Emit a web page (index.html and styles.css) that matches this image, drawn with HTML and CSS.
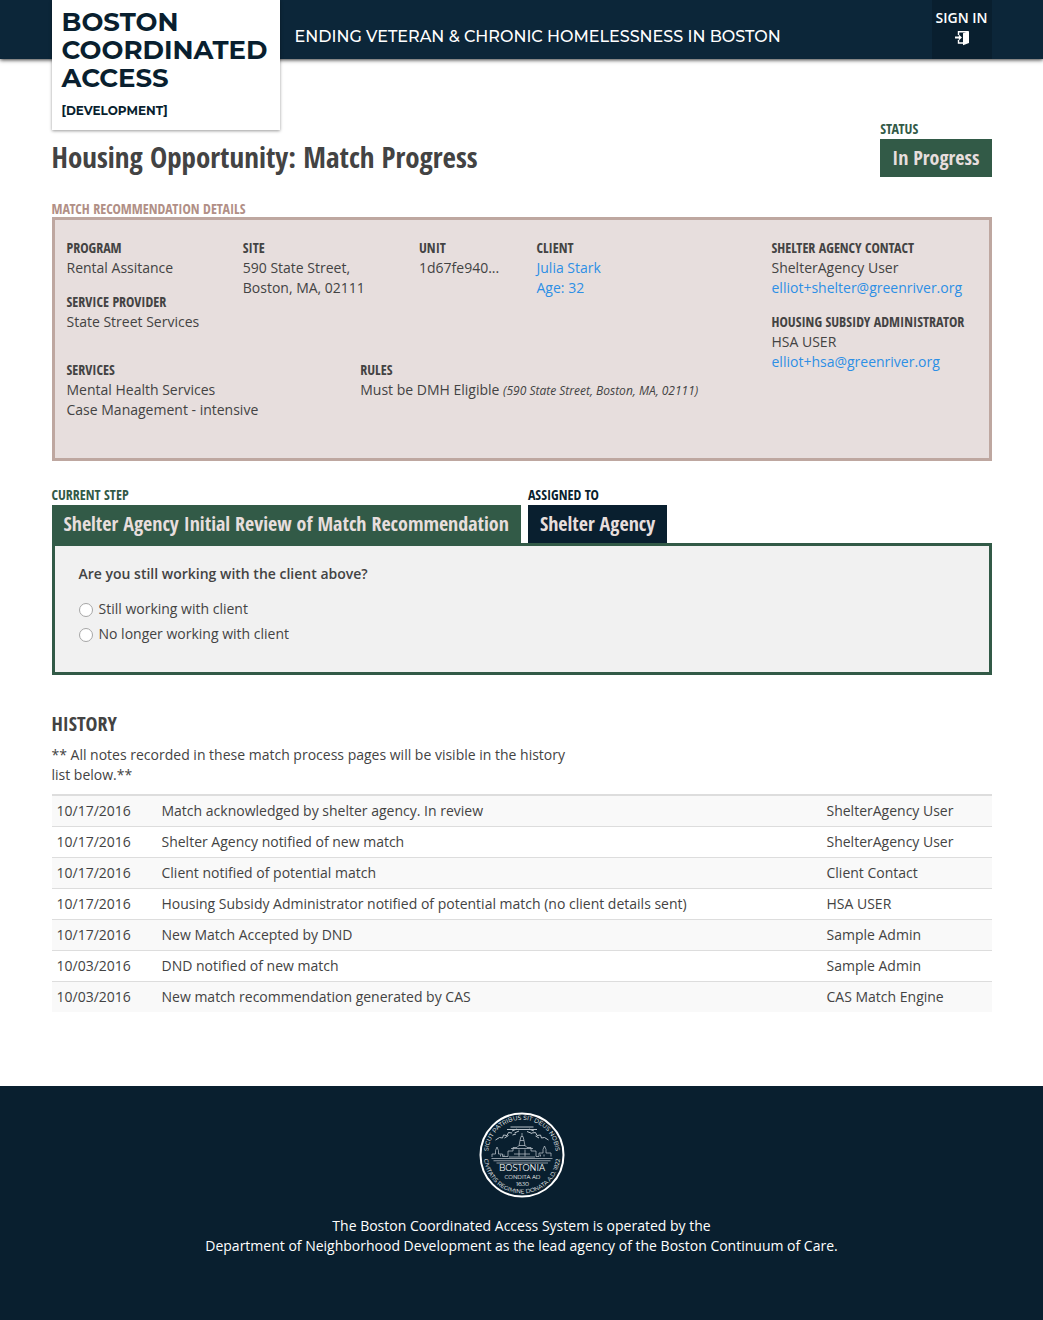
FILE: index.html
```html
<!DOCTYPE html>
<html lang="en">
<head>
<meta charset="utf-8">
<meta name="viewport" content="width=device-width, initial-scale=1">
<title>Boston Coordinated Access</title>
<link rel="stylesheet" href="styles.css">
</head>
<body>
<header class="site-header">
  <div class="container site-header-inner">
    <a class="logo" href="#"><span class="logo-name">Boston Coordinated Access</span><span class="logo-env">[Development]</span></a>
    <p class="tagline">Ending Veteran &amp; Chronic Homelessness in Boston</p>
    <a class="sign-in" href="#">Sign In
      <svg class="sign-in-icon" viewBox="0 0 14 14" aria-hidden="true"><path d="M3.500 4V.700H13M3.500 9v3H8" fill="none" stroke="#fff" stroke-width="1.400"/><path d="M8 2.300L14 0v12L8 14.300z" fill="#fff"/><path d="M0 5.600h3.800V3.600L7 6.500 3.800 9.400V7.400H0z" fill="#fff"/></svg>
    </a>
  </div>
</header>

<main class="container">
  <div class="title-row">
    <h1 class="page-title">Housing Opportunity: Match Progress</h1>
    <div class="flag flag-green">
      <span class="label">Status</span>
      <strong class="flag-value">In Progress</strong>
    </div>
  </div>

  <section class="details">
    <h2 class="label details-heading">Match Recommendation Details</h2>
    <div class="details-panel">
      <div class="details-main">
        <div class="details-top">
          <div class="facts">
            <div><h3 class="label">Program</h3>Rental Assitance</div>
            <div><h3 class="label">Service Provider</h3>State Street Services</div>
          </div>
          <div><h3 class="label">Site</h3>590 State Street,<br>Boston, MA, 02111</div>
          <div><h3 class="label">Unit</h3>1d67fe940...</div>
          <div><h3 class="label">Client</h3><a href="#">Julia Stark<br>Age: 32</a></div>
        </div>
        <div class="details-bottom">
          <div><h3 class="label">Services</h3>Mental Health Services<br>Case Management - intensive</div>
          <div><h3 class="label">Rules</h3>Must be DMH Eligible <em class="rule-note">(590 State Street, Boston, MA, 02111)</em></div>
        </div>
      </div>
      <div class="facts details-contacts">
        <div><h3 class="label">Shelter Agency Contact</h3>ShelterAgency User<br><a href="#">elliot+shelter@greenriver.org</a></div>
        <div><h3 class="label">Housing Subsidy Administrator</h3>HSA USER<br><a href="#">elliot+hsa@greenriver.org</a></div>
      </div>
    </div>
  </section>

  <section class="step">
    <div class="step-flags">
      <div class="flag flag-green">
        <span class="label">Current Step</span>
        <strong class="flag-value">Shelter Agency Initial Review of Match Recommendation</strong>
      </div>
      <div class="flag flag-navy">
        <span class="label">Assigned To</span>
        <strong class="flag-value">Shelter Agency</strong>
      </div>
    </div>
    <fieldset class="step-panel">
      <legend class="question">Are you still working with the client above?</legend>
      <label class="choice"><input class="radio" type="radio" name="working">Still working with client</label>
      <label class="choice"><input class="radio" type="radio" name="working">No longer working with client</label>
    </fieldset>
  </section>

  <section class="history">
    <h2 class="history-heading">History</h2>
    <p class="history-note">** All notes recorded in these match process pages will be visible in the history list below.**</p>
    <table class="history-table">
      <tbody>
        <tr><td class="col-date">10/17/2016</td><td>Match acknowledged by shelter agency. In review</td><td class="col-user">ShelterAgency User</td></tr>
        <tr><td>10/17/2016</td><td>Shelter Agency notified of new match</td><td>ShelterAgency User</td></tr>
        <tr><td>10/17/2016</td><td>Client notified of potential match</td><td>Client Contact</td></tr>
        <tr><td>10/17/2016</td><td>Housing Subsidy Administrator notified of potential match (no client details sent)</td><td>HSA USER</td></tr>
        <tr><td>10/17/2016</td><td>New Match Accepted by DND</td><td>Sample Admin</td></tr>
        <tr><td>10/03/2016</td><td>DND notified of new match</td><td>Sample Admin</td></tr>
        <tr><td>10/03/2016</td><td>New match recommendation generated by CAS</td><td>CAS Match Engine</td></tr>
      </tbody>
    </table>
  </section>
</main>

<footer class="site-footer">
  <svg class="seal" viewBox="0 0 344 344" role="img" aria-label="Seal of the City of Boston">
    <defs>
      <path id="arc-top" d="M37 166A135 135 0 0 1 307 166"/>
      <path id="arc-bottom" d="M20 174A152 152 0 0 0 324 174"/>
    </defs>
    <circle cx="172" cy="172" r="166" fill="none" stroke="#fff" stroke-width="8"/>
    <g class="seal-text">
      <text font-size="24"><textPath href="#arc-top" startOffset="50%">SICUT PATRIBUS SIT DEUS NOBIS</textPath></text>
      <text font-size="23"><textPath href="#arc-bottom" startOffset="50%">CIVITATIS REGIMINE DONATA A.D. 1822</textPath></text>
      <text x="172" y="236" font-size="34">BOSTONIA</text>
      <text x="174" y="267" font-size="22">CONDITA AD</text>
      <text x="174" y="297" font-size="24">1630</text>
    </g>
    <g fill="none" stroke="#b9c2c9" stroke-width="3">
      <path d="M50 186H294M58 195H286M70 204H276"/>
      <path d="M52 180v-12h14v-14l6-14 6 14v14h16v10h22v-22h20v-14h16l8-8h24l8 8h16v14h20v22h12v-14h16v-14l6-14 6 14v14h20v14"/>
      <path d="M160 136l4-22h16l4 22M164 114l4-16h8l4 16M172 98V84M128 146h88M140 168h64M120 180h104M160 150v28M184 150v28"/>
      <path d="M132 76l20-8M142 84l18-8M134 92l14-4M200 68l20 8M192 78l20 8M66 112l16-10 12 2 4-12 14 2 6-12 14 2M278 112l-16-10-12 2-4-12-14 2-6-12-14 2M102 104l16-10M240 104l-14-8M112 70h120M126 60h92" stroke-width="4"/>
      <path d="M86 178v-8M100 178v-8M246 178v-8M260 178v-8"/>
    </g>
  </svg>
  <p class="footer-text">The Boston Coordinated Access System is operated by the<br>Department of Neighborhood Development as the lead agency of the Boston Continuum of Care.</p>
</footer>
</body>
</html>
```
FILE: styles.css
```css
:root {
  --navy: #091f2f;
  --green: #325a47;
  --text: #434343;
  --condensed: "Open Sans Condensed", "Liberation Sans Narrow", "Open Sans", sans-serif;
  --display: "Montserrat", "Inter", sans-serif;
}

* { box-sizing: border-box; }

body {
  margin: 0;
  color: var(--text);
  background: #fff;
  font: 14px/20px "Open Sans", sans-serif;
}

h1, h2, h3, p { margin: 0; }

a { color: #2d8fe5; text-decoration: none; }

.container {
  width: 100%;
  max-width: 970px;
  margin: 0 auto;
  padding: 0 15px;
}

/* Header */
.site-header {
  position: relative;
  background: #0c2639;
  box-shadow: 0 1px 4px rgba(0, 0, 0, .8);
}

.site-header-inner {
  display: flex;
  align-items: stretch;
  height: 59px;
}

.logo {
  display: flex;
  flex: none;
  flex-direction: column;
  align-self: flex-start;
  gap: 9px;
  width: 228px;
  height: 130px;
  padding: 8px 10px;
  color: var(--navy);
  background: #fff;
  box-shadow: 0 1px 3px rgba(0, 0, 0, .4);
  font-family: var(--display);
  font-weight: 700;
  text-transform: uppercase;
}

.logo-name { font-size: 26px; line-height: 28px; }

.logo-env { font-size: 12px; line-height: 20px; }

.tagline {
  flex: 1;
  padding: 27px 15px 0;
  color: #fff;
  font-family: var(--display);
  font-size: 16px;
  font-weight: 500;
  text-transform: uppercase;
}

.sign-in {
  display: flex;
  flex: none;
  flex-direction: column;
  align-items: center;
  gap: 3px;
  width: 60px;
  padding-top: 8px;
  color: #fff;
  background: var(--navy);
  font-weight: 600;
  text-transform: uppercase;
  white-space: nowrap;
}

.sign-in-icon { width: 14px; height: 14px; overflow: visible; }

/* Labels and coloured flags */
.label {
  display: block;
  font-family: var(--condensed);
  font-size: 14px;
  font-weight: 700;
  line-height: 20px;
  text-transform: uppercase;
}

.flag-value {
  display: block;
  padding: 8px 12px;
  color: #e7dedd;
  font-family: var(--condensed);
  font-size: 20px;
  line-height: 22px;
}

.flag-green { color: var(--green); }
.flag-green .flag-value { background: var(--green); }
.flag-navy { color: var(--navy); }
.flag-navy .flag-value { background: var(--navy); }

.title-row {
  display: flex;
  align-items: flex-end;
  justify-content: space-between;
  padding-top: 60px;
}

.page-title {
  font-family: var(--condensed);
  font-size: 29px;
  line-height: 40px;
}

/* Match details */
.details { margin-top: 24px; }

.details-heading { color: #b18f86; line-height: 16px; }

.details-panel {
  display: flex;
  padding: 18px 0 38px 12px;
  background: #e7dedd;
  border: 3px solid #bea7a0;
}

.details-main { flex: 705; min-width: 0; }

.details-contacts { flex: 217; min-width: 0; }

.details-top {
  display: grid;
  grid-template-columns: 3fr 3fr 2fr 4fr;
}

.details-bottom {
  display: grid;
  grid-template-columns: 5fr 7fr;
  margin-top: 28px;
}

.facts {
  display: flex;
  flex-direction: column;
  gap: 14px;
}

.rule-note { font-size: 12px; }

/* Current step */
.step { margin-top: 24px; }

.step-flags { display: flex; gap: 7px; }

.step-panel {
  display: flex;
  flex-direction: column;
  gap: 5px;
  margin: 0;
  padding: 18px 24px 28px;
  background: #f1f1f1;
  border: 3px solid var(--green);
}

.question {
  float: left;
  margin-bottom: 10px;
  padding: 0;
  font-weight: 600;
}

.choice {
  display: flex;
  align-items: center;
  gap: 6px;
}

.radio {
  appearance: none;
  width: 14px;
  height: 14px;
  margin: 2px 0 0;
  background: #fff;
  border: 1px solid #a6a6a6;
  border-radius: 50%;
}

.radio:checked { border: 4px solid var(--green); }

/* History */
.history { margin-top: 37px; }

.history-heading {
  font-family: var(--condensed);
  font-size: 20px;
  line-height: 24px;
  text-transform: uppercase;
}

.history-note { max-width: 520px; margin: 9px 0; }

.history-table {
  width: 100%;
  border-top: 1px solid #ddd;
  border-spacing: 0;
  table-layout: fixed;
}

.history-table td { padding: 5px; border-top: 1px solid #ddd; }

.history-table tr:nth-child(odd) { background: #f9f9f9; }

.col-date { width: 105px; }

.col-user { width: 170px; }

/* Footer */
.site-footer {
  margin-top: 74px;
  padding: 26px 15px 64px;
  color: #fff;
  background: var(--navy);
  text-align: center;
}

.seal { display: block; width: 86px; height: 86px; margin: 0 auto 18px; }

.seal-text {
  fill: #fff;
  font-family: var(--display);
  text-anchor: middle;
}
```
